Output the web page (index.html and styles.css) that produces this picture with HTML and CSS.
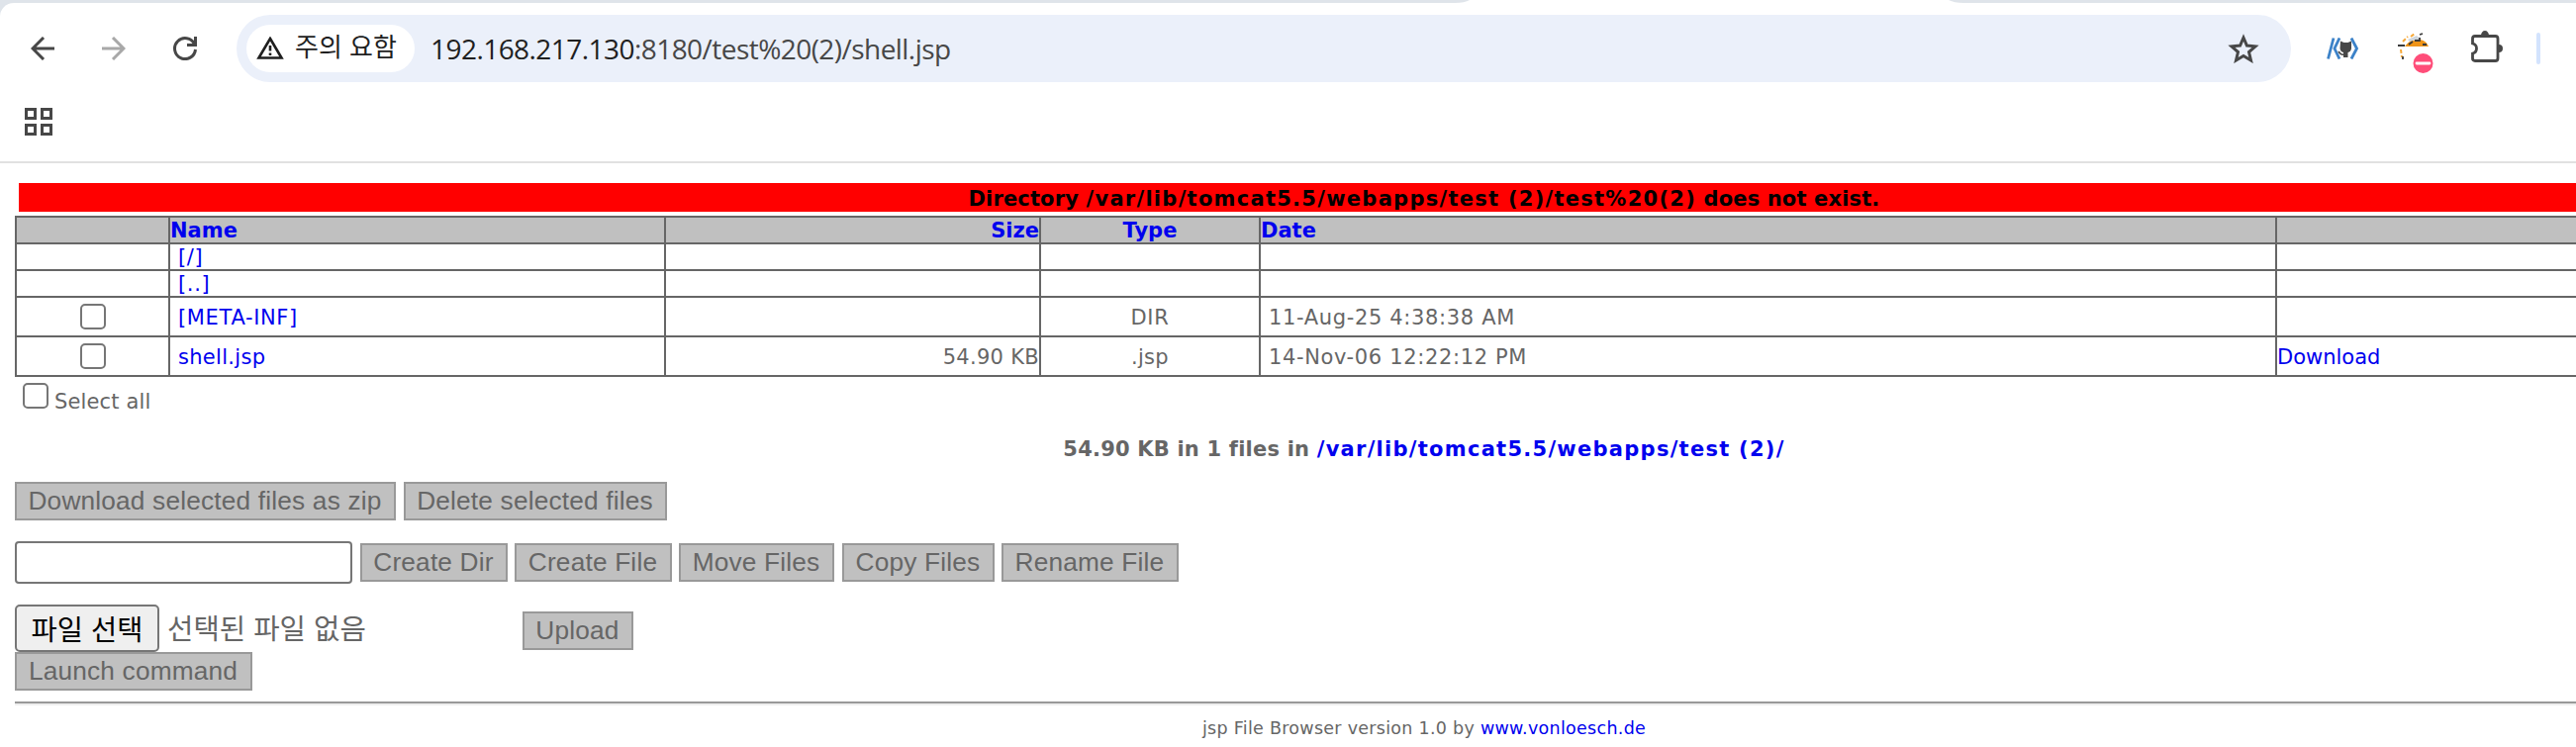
FILE: index.html
```html
<!DOCTYPE html>
<html lang="ko">
<head>
<meta charset="utf-8">
<title>jsp File Browser</title>
<link rel="stylesheet" href="styles.css">
</head>
<body>
<header class="chrome">
  <svg class="tabstrip" viewBox="0 0 2603 3" width="2603" height="3"><path d="M1470 3Q1480 3 1485 0H1969Q1975 3 1984 3z" fill="#fff"/></svg>
  <div class="toolbar">
    <svg class="icon back" viewBox="0 0 24 24" width="24" height="24"><path d="M24 12H2.500M13 1 2 12l11 11" fill="none" stroke="#474747" stroke-width="3"/></svg>
    <svg class="icon forward" viewBox="0 0 24 24" width="24" height="24"><path d="M0 12h21.500M11 1l11 11-11 11" fill="none" stroke="#a8a8a8" stroke-width="3"/></svg>
    <svg class="icon reload" viewBox="0 0 24 24" width="24" height="24"><path d="M21.500 7.500A10.500 10.500 0 1 0 22.500 13" fill="none" stroke="#474747" stroke-width="3"/><path d="M24 0v10H14V7h7V0z" fill="#474747"/></svg>
    <div class="omnibox">
      <div class="chip">
        <svg viewBox="0 0 28 24" width="28" height="24"><path d="M14 2 25.500 21.500H2.500z" fill="none" stroke="#1f1f1f" stroke-width="2.600"/><path d="M12.700 9h2.600v5.500h-2.600zM12.700 16.500h2.600v2.500h-2.600z" fill="#1f1f1f"/></svg>
        <span class="chip-text">주의 요함</span>
      </div>
      <div class="url"><span class="host">192.168.217.130</span><span class="path">:8180/test%20(2)/shell.jsp</span></div>
      <svg class="star" viewBox="0 0 32 30" width="32" height="30"><path d="M16 4l3.400 8 8.600.800-6.500 5.700 2 8.500L16 22.500 8.500 27l2-8.500L4 12.800l8.600-.800z" fill="none" stroke="#474747" stroke-width="3"/></svg>
    </div>
    <svg class="ext github" viewBox="0 0 32 22" width="32" height="22"><path d="M1.500 21.500 7 .500M13 .500 8 11l5 10.500M25 .500l5.500 10.500L25 21.500" fill="none" stroke="#3c82c8" stroke-width="2.800"/><path d="M14 3.500l3.500 1.500h4L25 3.500v7.500q-.500 3.500-3.500 4v5h-4.500v-5q-3-.500-3.500-4z" fill="#474747"/><path d="M12 14q2.500 4 6 3" fill="none" stroke="#474747" stroke-width="1.500"/></svg>
    <svg class="ext bug" viewBox="0 0 36 42" width="36" height="42"><path d="M10 7l9-4 5 5-9 4z" fill="#cfd6dc"/><path d="M7 14q4-6 9-6l6-1q7 1 9 7z" fill="#ef9417"/><path d="M5 9l5-5M13 4l4-3M3 17l1 8" stroke="#f6a838" stroke-width="2" stroke-dasharray="4 2"/><path d="M0 13h7M11 12l4-3M17 8h5v-3M22 2l3-1M25 12h4M5 24v3" fill="none" stroke="#3a3a3a" stroke-width="1.800"/><circle cx="25.500" cy="31" r="10" fill="#ff4d79"/><path d="M19 31h13" stroke="#fff" stroke-width="2.800" stroke-linecap="round"/></svg>
    <svg class="ext puzzle" viewBox="0 0 33 33" width="33" height="33"><path d="M1.500 12V8q0-2.500 2.500-2.500H24.500q2.500 0 2.500 2.500V28q0 2.500-2.500 2.500H4q-2.500 0-2.500-2.500V24Q5.500 22.500 5.500 18T1.500 12z" fill="none" stroke="#fff" stroke-width="0"/><path d="M1.500 13V8q0-2.500 2.500-2.500H24.500q2.500 0 2.500 2.500V28q0 2.500-2.500 2.500H4q-2.500 0-2.500-2.500V23Q5.500 22 5.500 18T1.500 13z" fill="none" stroke="#474747" stroke-width="2.800"/><path d="M10 5a4 5 0 0 1 8 0zM28 14a4 4 0 0 1 0 8z" fill="#474747"/></svg>
    <div class="divider"></div>
  </div>
  <div class="bookmarks">
    <svg viewBox="0 0 28 28" width="28" height="28"><path d="M1.500 1.500h9v9h-9zM17.500 1.500h9v9h-9zM1.500 17.500h9v9h-9zM17.500 17.500h9v9h-9z" fill="none" stroke="#474747" stroke-width="3"/></svg>
  </div>
</header>
<main class="page">
  <div class="error">Directory <span class="dir">/var/lib/tomcat5.5/webapps/test (2)/test%20(2)</span> does not exist.</div>
  <table class="files">
    <colgroup><col class="c-check"><col class="c-name"><col class="c-size"><col class="c-type"><col class="c-date"><col></colgroup>
    <tr class="head"><th></th><th><a>Name</a></th><th class="right"><a>Size</a></th><th class="center"><a>Type</a></th><th><a>Date</a></th><th></th></tr>
    <tr><td></td><td class="pad wide"><a>[/]</a></td><td></td><td></td><td></td><td></td></tr>
    <tr><td></td><td class="pad wide"><a>[..]</a></td><td></td><td></td><td></td><td></td></tr>
    <tr class="tall"><td class="center mark"><input type="checkbox" class="check"></td><td class="pad wide"><a>[META-INF]</a></td><td></td><td class="center wide">DIR</td><td class="pad wide">11-Aug-25 4:38:38 AM</td><td></td></tr>
    <tr class="tall"><td class="center mark"><input type="checkbox" class="check"></td><td class="pad"><a>shell.jsp</a></td><td class="right">54.90 KB</td><td class="center">.jsp</td><td class="pad wide">14-Nov-06 12:22:12 PM</td><td class="link"><a>Download</a></td></tr>
  </table>
  <label class="select-all"><input type="checkbox" class="check"><span>Select all</span></label>
  <div class="summary">54.90 KB in 1 files in <a class="dir">/var/lib/tomcat5.5/webapps/test (2)/</a></div>
  <div class="row actions">
    <button class="btn w-zip">Download selected files as zip</button><button class="btn w-delete">Delete selected files</button>
  </div>
  <div class="row create">
    <input type="text" class="field"><button class="btn w-dir">Create Dir</button><button class="btn w-file">Create File</button><button class="btn w-move">Move Files</button><button class="btn w-copy">Copy Files</button><button class="btn w-rename">Rename File</button>
  </div>
  <div class="row upload">
    <button class="choose">파일 선택</button><span class="nofile">선택된 파일 없음</span><button class="btn w-upload">Upload</button>
  </div>
  <div class="row"><button class="btn w-launch">Launch command</button></div>
  <hr class="rule">
  <footer class="footer"><span>jsp File Browser version 1.0 by <a>www.vonloesch.de</a></span></footer>
</main>
</body>
</html>
```
FILE: styles.css
```css
* { box-sizing: border-box; }
html, body { margin: 0; height: 755px; overflow: hidden; background: #fff; }
body { font-family: "DejaVu Sans", sans-serif; font-size: 21px; color: #666; }
.chrome { height: 165px; border-bottom: 2px solid #e1e1e1; background: #dfe4ea; }
.tabstrip { display: block; }
.toolbar { display: flex; align-items: center; height: 92px; background: #fff; border-radius: 14px 0 0 0; padding-left: 31px; }
.icon { flex: none; margin-right: 48px; }
.reload { margin-right: 40px; }
.omnibox { display: flex; align-items: center; flex: none; width: 2076px; height: 68px; border-radius: 34px; background: #ebf0fa; padding: 0 32px 0 10px; }
.chip { display: flex; align-items: center; width: 170px; height: 48px; border-radius: 24px; background: #fff; padding-left: 10px; gap: 11px; }
.chip-text { font-family: "Noto Sans CJK KR", sans-serif; font-size: 26px; line-height: 46px; height: 52px; color: #1f1f1f; white-space: nowrap; }
.url { flex: 1; margin-left: 16px; font-family: "Open Sans", sans-serif; font-size: 28px; letter-spacing: -0.55px; white-space: nowrap; }
.host { color: #1f1f1f; }
.path { color: #474747; }
.ext { flex: none; }
.github { margin-left: 36px; }
.bug { margin: 10px 0 0 40px; }
.puzzle { margin: 0 0 3px 38px; }
.divider { width: 4px; height: 32px; border-radius: 2px; background: #d3e3fd; margin-left: 33px; }
.bookmarks { height: 68px; background: #fff; padding: 14px 0 0 25px; }
.bookmarks svg { display: block; }
.page { width: 2878px; padding: 20px 15px 0 15px; white-space: nowrap; }
a { color: #00e; text-decoration: none; }
.error { height: 29px; margin: 0 4px; background: #f00; color: #000; text-align: center; font-weight: bold; line-height: 32px; letter-spacing: 0.15px; }
.dir { letter-spacing: 1.27px; }
.files { width: 2848px; margin-top: 4px; border-collapse: collapse; table-layout: fixed; line-height: 23px; }
.files tr { height: 27px; }
.files tr.tall { height: 40px; }
.files th, .files td { border: 2px solid #666; padding: 2px 0 0; text-align: left; height: inherit; }
.files td { letter-spacing: 0.3px; }
.files td.wide { letter-spacing: 0.65px; }
.files td.link { letter-spacing: 0; }
.files td.mark { padding: 0; }
.files .tall td:not(.mark) { padding-top: 3px; }
.head th { background: #c0c0c0; }
.files .right { text-align: right; }
.files .center { text-align: center; }
.files .pad { padding-left: 8px; }
.c-check { width: 155px; } .c-name { width: 501px; } .c-size { width: 379px; } .c-type { width: 222px; } .c-date { width: 1027px; }
.check { appearance: none; display: inline-block; width: 26px; height: 26px; margin: 0; border: 2px solid #767676; border-radius: 5px; background: #fff; vertical-align: middle; }
.select-all { display: flex; height: 40px; padding: 6px 0 0 8px; gap: 6px; }
.select-all span { line-height: 38px; letter-spacing: 0.15px; }
.summary { margin-top: 18px; height: 30px; line-height: 30px; text-align: center; font-weight: bold; letter-spacing: 0.2px; }
.row { display: flex; gap: 8px; align-items: flex-start; }
.btn { flex: none; height: 39px; padding: 0 1px 0 0; border: 2px solid #999; background: #c0c0c0; color: #666; font: 26.250px "Liberation Sans", sans-serif; line-height: 33px; letter-spacing: 0.18px; white-space: nowrap; }
.actions { margin-top: 18px; }
.create { margin-top: 21px; align-items: center; gap: 7px; }
.field { width: 341px; height: 43px; margin-right: 1px; border: 2px solid #767676; border-radius: 4px; }
.upload { margin-top: 21px; height: 48px; }
.choose { width: 146px; height: 48px; padding: 0; border: 2px solid #767676; border-radius: 5px; background: #efefef; color: #000; font: 28.500px/40px "Noto Sans CJK KR", sans-serif; }
.nofile { width: 351px; font: 28.700px/46px "Noto Sans CJK KR", sans-serif; }
.upload .btn { margin-top: 7px; }
.w-zip { width: 385px; } .w-delete { width: 266px; }
.w-dir { width: 149px; } .w-file { width: 159px; } .w-move { width: 157px; } .w-copy { width: 154px; margin-left: 1px; } .w-rename { width: 179px; }
.w-upload { width: 112px; } .w-launch { width: 240px; }
.rule { height: 4px; margin: 11px 0 0; border: 0; border-top: 2px solid #999; border-bottom: 2px solid #eee; }
.footer { margin-top: 11px; text-align: center; font-size: 17.500px; line-height: 24px; letter-spacing: 0.28px; }
```
